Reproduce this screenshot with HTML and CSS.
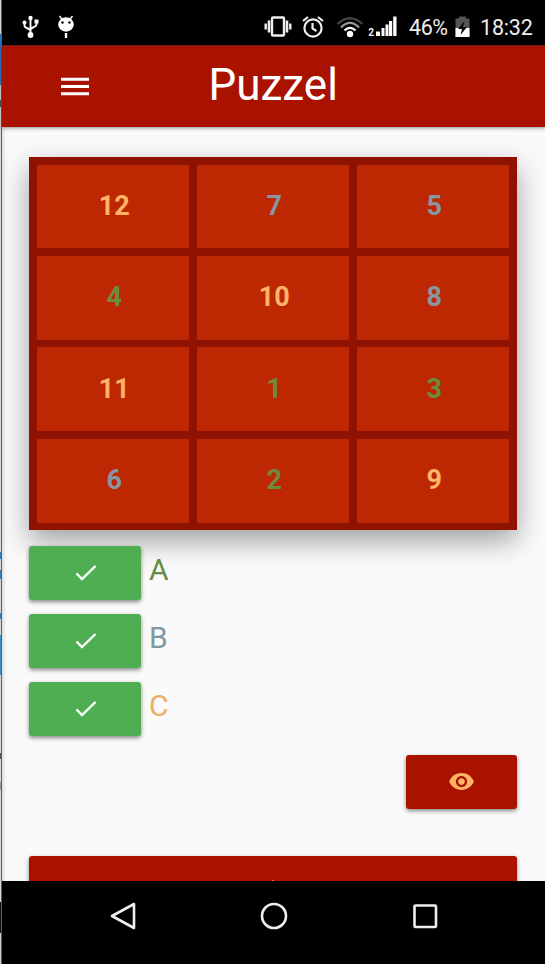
FILE: index.html
```html
<!DOCTYPE html>
<html lang="nl">
<head>
<meta charset="utf-8">
<title>Puzzel</title>
<link rel="stylesheet" href="styles.css">
</head>
<body>
<div class="desktop">
  <div class="edge"></div>
  <div class="phone">
    <div class="status">
      <svg class="usb" width="17" height="24" viewBox="0 0 17 24" fill="none" stroke="#fff" stroke-width="1.9"><path d="M8.5 3v17M2.5 7v4c0 2.500 6 2 6 5M14.500 6v3.500c0 3-6 2.500-6 5.500"/><circle cx="8.500" cy="20" r="2.900" fill="#fff" stroke="none"/><circle cx="8.500" cy="3" r="2.200" fill="#fff" stroke="none"/><circle cx="2.500" cy="7.500" r="2" fill="#fff" stroke="none"/><path d="M12.500 4.500h4v4h-4z" fill="#fff" stroke="none"/></svg>
      <svg class="bug" width="18" height="24" viewBox="0 0 18 24"><path d="M2.500 1l3 4M15.500 1l-3 4" stroke="#fff" stroke-width="1.400"/><ellipse cx="9" cy="9.500" rx="7.800" ry="7.200" fill="#fff"/><path d="M9 18v5" stroke="#fff" stroke-width="2.400"/><circle cx="5.500" cy="7.500" r="1.200"/><circle cx="12.500" cy="7.500" r="1.200"/></svg>
      <div class="indicators">
        <svg width="28" height="22" viewBox="0 0 28 22" fill="none" stroke="#eee"><rect x="8" y="1.500" width="12" height="18" rx="1" stroke-width="2.400"/><path d="M5 4.500v12M23 4.500v12" stroke-width="2.600"/><path d="M1.700 7.500v6M26.300 7.500v6" stroke-width="2.400"/></svg>
        <svg class="alarm" width="22" height="22" viewBox="0 0 22 22" fill="none" stroke="#eee" stroke-width="2.200"><circle cx="11" cy="12" r="8.600"/><path d="M10.500 7v5.500l4 2.500M1 5l5-4M21 5l-5-4"/></svg>
        <svg class="wifi" width="28" height="22" viewBox="0 0 28 22" fill="none" stroke-width="2.200"><path d="M1.500 8Q14-3.500 26.500 8" stroke="#444"/><path d="M5 11.500Q14 2.500 23 11.500" stroke="#999"/><path d="M8.500 14.500Q14 9 19.500 14.500" stroke="#fff"/><circle cx="14" cy="18" r="3.200" fill="#fff"/></svg>
        <span class="sim">2</span>
        <svg class="signal" width="21" height="21" viewBox="0 0 21 21" fill="#fff"><path d="M0 15.500h4V20H0zM5.500 12h3v8h-3zM9.500 8.500h3V20h-3zM13 5h3.200v15H13zM17.200 0.500h3.300V20h-3.300z"/></svg>
        <span class="percent">46%</span>
        <svg class="battery" width="15" height="22" viewBox="0 0 15 22"><path d="M.5 2.500H4V.5h7v2h3.500V21H.5z" fill="#555"/><path d="M.5 12h14v9H.5z" fill="#fff"/><path d="M9.500 5L3 13h4l-1.500 6L12 11H8z" fill="#080808"/></svg>
        <span class="clock">18:32</span>
      </div>
    </div>
    <header class="toolbar">
      <svg class="menu" width="28" height="20" viewBox="0 0 28 20"><path d="M0 2.200h28M0 9.500h28M0 16.800h28" stroke="#fff" stroke-width="3"/></svg>
      <h1>Puzzel</h1>
    </header>
    <main>
      <div class="board">
        <div class="tile c">12</div><div class="tile b">7</div><div class="tile b">5</div>
        <div class="tile a">4</div><div class="tile c">10</div><div class="tile b">8</div>
        <div class="tile c">11</div><div class="tile a">1</div><div class="tile a">3</div>
        <div class="tile b">6</div><div class="tile a">2</div><div class="tile c">9</div>
      </div>
      <div class="answers">
        <div class="answer"><button class="btn check"><svg width="22" height="18" viewBox="0 0 22 18"><path d="M1.500 9.500l5.500 5.500L20.500 2" fill="none" stroke="#fff" stroke-width="2.400"/></svg></button><span class="letter a">A</span></div>
        <div class="answer"><button class="btn check"><svg width="22" height="18" viewBox="0 0 22 18"><path d="M1.500 9.500l5.500 5.500L20.500 2" fill="none" stroke="#fff" stroke-width="2.400"/></svg></button><span class="letter b">B</span></div>
        <div class="answer"><button class="btn check"><svg width="22" height="18" viewBox="0 0 22 18"><path d="M1.500 9.500l5.500 5.500L20.500 2" fill="none" stroke="#fff" stroke-width="2.400"/></svg></button><span class="letter c">C</span></div>
      </div>
      <button class="btn reveal"><svg width="27" height="27" viewBox="0 0 24 24" fill="#ffb366"><path d="M12 4.500C7 4.500 2.730 7.610 1 12c1.730 4.390 6 7.500 11 7.500s9.270-3.110 11-7.500c-1.730-4.390-6-7.500-11-7.500zM12 17c-2.760 0-5-2.240-5-5s2.240-5 5-5 5 2.240 5 5-2.240 5-5 5zm0-8c-1.660 0-3 1.340-3 3s1.340 3 3 3 3-1.340 3-3-1.340-3-3-3z"/></svg></button>
      <button class="btn next"><span class="tip"></span></button>
    </main>
    <nav>
      <svg width="30" height="30" viewBox="0 0 30 30"><path d="M4 15L26 3v24z"/></svg>
      <svg width="30" height="30" viewBox="0 0 30 30"><circle cx="15" cy="15" r="12"/></svg>
      <svg width="30" height="30" viewBox="0 0 30 30"><rect x="4.500" y="4.500" width="21.500" height="21.500" rx="1"/></svg>
    </nav>
  </div>
</div>
</body>
</html>
```
FILE: styles.css
```css
* { box-sizing: border-box; }
body { margin: 0; font-family: Roboto, sans-serif; background: #fafafb; }
svg { display: block; flex: none; }
h1 { margin: 0; }
.desktop { display: flex; width: 545px; height: 964px; overflow: hidden; }
.edge {
  width: 2px;
  border-right: 1px solid #5c5e60;
  background: linear-gradient(#d0d2d4 34px, #2a75bd 34px 85px, #d0d2d4 85px 100px, #555 100px 107px, #d8d8d8 107px 552px, #2e83c4 552px 559px, #d8d8d8 559px 570px, #397cae 570px 579px, #d8d8d8 579px 613px, #2e83c4 613px 619px, #d8d8d8 619px 635px, #3595cc 635px 675px, #d8d8d8 675px 753px, #555 753px 759px, #d8d8d8 759px 782px, #999 782px 790px, #d8d8d8 790px 902px, #111 902px 933px, #c8cac8 933px);
}
.phone { width: 543px; display: flex; flex-direction: column; }
.status {
  height: 45px; flex: none; background: #000; color: #eee;
  display: flex; align-items: flex-start; padding: 15px 11px 0 20px;
}
.bug { margin-left: 18px; }
.indicators { display: flex; margin-left: auto; height: 24px; align-items: flex-start; padding-top: 1px; }
.alarm { margin-left: 10px; }
.wifi { margin-left: 12px; }
.sim { font-size: 10px; line-height: 12px; font-weight: 700; margin: 11px 2px 0 4px; }
.percent, .clock { font-size: 21.5px; line-height: 24px; }
.percent { width: 41px; margin-left: 12px; letter-spacing: -0.4px; }
.battery { margin-left: 5px; }
.clock { margin-left: 10px; width: 54px; letter-spacing: -0.2px; }
.toolbar {
  height: 82px; flex: none; background: #aa1200; border-top: 1px solid #702018;
  display: flex; align-items: center; padding-left: 59px; color: #fff;
  position: relative; box-shadow: 0 1px 4px rgba(0,0,0,.42);
}
.toolbar h1 { font-size: 44px; line-height: 50px; font-weight: 400; margin-left: 119.500px; padding-bottom: 3px; }
main {
  flex: 1; min-height: 0; overflow: hidden; background: #fafafb;
  padding: 30px 28px 0 27.400px; display: flex; flex-direction: column;
  box-shadow: inset 4px 0 5px -3px rgba(0,0,0,.18);
}
.board {
  height: 373px; flex: none; padding: 7.500px; background: #901203;
  display: grid; grid-template: repeat(4, 1fr) / repeat(3, 1fr); gap: 7.500px;
  box-shadow: 0 11px 27px rgba(0,0,0,.36);
}
.tile {
  background: #bd2803; display: flex; align-items: center; justify-content: center;
  font-size: 27px; line-height: 30px; font-weight: 700; padding: 0 0 1px 2px;
}
.a { color: #6e8b3d; }
.b { color: #8995a0; }
.c { color: #ffb366; }
.answers { display: flex; flex-direction: column; gap: 14.500px; margin-top: 16px; }
.answer { display: flex; height: 53.500px; }
.letter { font-size: 30px; line-height: 48px; margin-left: 8px; }
.letter.a { color: #658d42; }
.letter.b { color: #7f99a3; }
.letter.c { color: #eeae62; }
.btn {
  border: 0; border-radius: 3px; padding: 0; width: 111.500px; height: 53.500px; flex: none;
  display: flex; align-items: center; justify-content: center;
  box-shadow: 0 2px 4px rgba(0,0,0,.46);
}
.check { background: #4fae52; padding-left: 1px; }
.reveal { background: #aa1200; align-self: flex-end; margin-top: 19.500px; }
.next { background: #aa1200; width: 100%; margin-top: 47px; align-items: flex-start; }
.tip { width: 2px; height: 2px; margin-top: 24px; background: #d27545; }
nav {
  height: 83px; flex: none; background: #000; display: flex; justify-content: space-between;
  padding: 20px 105.500px 0 105.500px; position: relative;
}
nav svg { fill: none; stroke: #eee; stroke-width: 2.600; stroke-linejoin: round; }
```
